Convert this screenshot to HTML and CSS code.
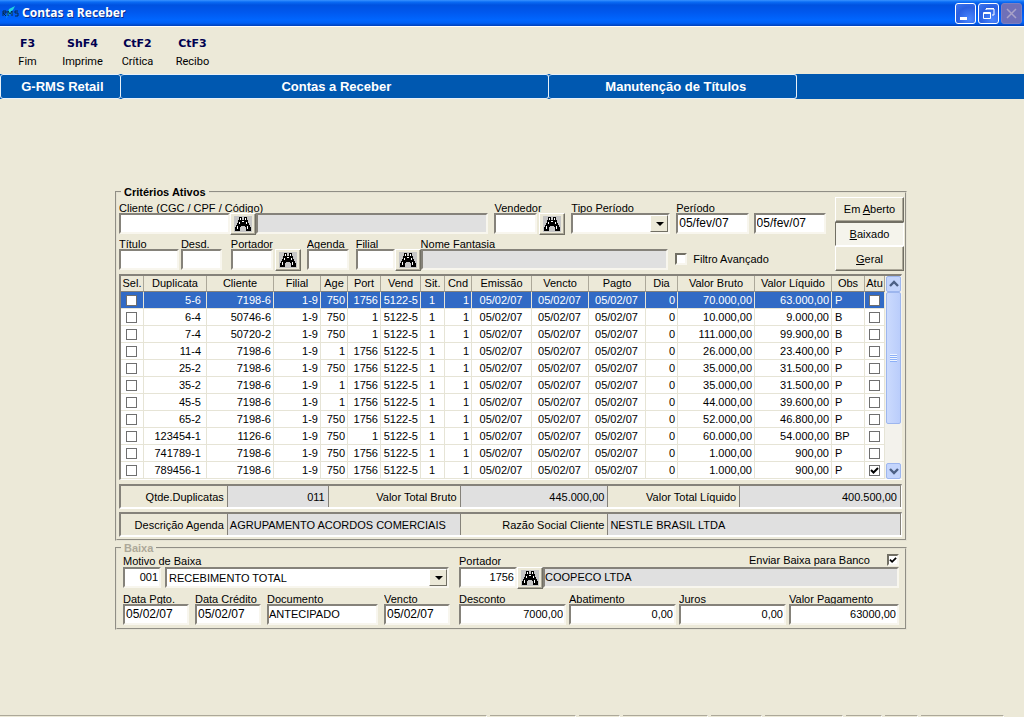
FILE: index.html
```html
<!DOCTYPE html>
<html lang="pt-BR">
<head>
<meta charset="utf-8">
<title>Contas a Receber</title>
<link rel="stylesheet" href="styles.css">
</head>
<body>
<svg class="defs" aria-hidden="true">
  <symbol id="bino" viewBox="0 0 18 16">
    <rect width="18" height="16" fill="#c6c6c6"/>
    <path d="M5 1h3v3h2V1h3v3h1v3h1v2h1v2h1v4h-5v-4h-1v-1H7v1H6v4H1v-4h1V9h1V7h1V4h1z" fill="#000"/>
    <path d="M6 2h1v2H6zM11 2h1v2h-1zM5 6h1v2H5zM12 6h1v2h-1zM3 10h1v3H3zM13 10h1v3h-1zM8 5h2v1H8z" fill="#fff"/>
  </symbol>
  <symbol id="up" viewBox="0 0 10 8"><path d="M1 6l4-4 4 4" fill="none" stroke="#4d6185" stroke-width="2.4"/></symbol>
  <symbol id="down" viewBox="0 0 10 8"><path d="M1 2l4 4 4-4" fill="none" stroke="#4d6185" stroke-width="2.4"/></symbol>
</svg>

<header class="titlebar">
  <svg class="logo" viewBox="0 0 17 16" width="17" height="16" aria-hidden="true">
    <path d="M4 14L7 4l6-3-2 4-3 2 3 1-5 2z" fill="#22d3e0"/>
    <path d="M1 11V6h3v2H1l3 3M6 11V6l2 3 2-3v5M16 6h-3v2h3v3h-3" fill="none" stroke="#062a4a" stroke-width="1"/>
  </svg>
  <h1 class="title">Contas a Receber</h1>
  <div class="winbtns">
    <button class="winbtn" aria-label="Minimizar"><svg viewBox="0 0 19 19"><path d="M4 13h7v3H4z" fill="#fff"/></svg></button>
    <button class="winbtn" aria-label="Restaurar"><svg viewBox="0 0 19 19"><path d="M7 6V5h8v6h-2M7 4.500h8" fill="none" stroke="#fff"/><path d="M4.500 8.500h7v6h-7zM4 9.500h8" fill="none" stroke="#fff"/></svg></button>
    <button class="winbtn winbtn-off" aria-label="Fechar" disabled><svg viewBox="0 0 19 19"><path d="M5 5l9 9M14 5l-9 9" fill="none" stroke="#a9a3c8" stroke-width="1.500"/></svg></button>
  </div>
</header>

<nav class="toolbar">
  <button class="tool"><b>F3</b><span>Fim</span></button>
  <button class="tool"><b>ShF4</b><span>Imprime</span></button>
  <button class="tool"><b>CtF2</b><span>Crítica</span></button>
  <button class="tool"><b>CtF3</b><span>Recibo</span></button>
</nav>

<div class="tabs">
  <div class="tab tab-a">G-RMS Retail</div>
  <div class="tab tab-b">Contas a Receber</div>
  <div class="tab tab-c">Manutenção de Títulos</div>
</div>

<main class="main">
<form>
<fieldset class="box box-criteria">
  <legend class="legend">Critérios Ativos</legend>
  <div class="filters">
    <div class="filter-rows">
      <div class="row">
        <div class="field w-cliente"><label for="cliente">Cliente (CGC / CPF / Código)</label>
          <div class="ctl"><input id="cliente" class="in w-cod"><button type="button" class="find" aria-label="Buscar cliente"><svg><use href="#bino"/></svg></button><input class="in ro grow" readonly aria-label="Nome do cliente"></div></div>
        <div class="field w-vendedor"><label for="vendedor">Vendedor</label>
          <div class="ctl ctl-gap"><input id="vendedor" class="in grow"><button type="button" class="find" aria-label="Buscar vendedor"><svg><use href="#bino"/></svg></button></div></div>
        <div class="field w-tipo"><label for="tipo">Tipo Período</label>
          <div class="ctl"><div class="combo"><select id="tipo"><option></option></select></div></div></div>
        <div class="field w-periodo"><label for="de">Período</label>
          <div class="ctl ctl-wide"><input id="de" class="in date grow" value="05/fev/07"><input class="in date grow" value="05/fev/07" aria-label="Período até"></div></div>
      </div>
      <div class="row">
        <div class="field w-titulo"><label for="titulo">Título</label><div class="ctl"><input id="titulo" class="in grow"></div></div>
        <div class="field w-desd"><label for="desd">Desd.</label><div class="ctl"><input id="desd" class="in grow"></div></div>
        <div class="field w-port"><label for="port">Portador</label>
          <div class="ctl ctl-gap"><input id="port" class="in grow"><button type="button" class="find" aria-label="Buscar portador"><svg><use href="#bino"/></svg></button></div></div>
        <div class="field w-agenda"><label for="agenda">Agenda</label><div class="ctl"><input id="agenda" class="in grow"></div></div>
        <div class="field w-filial"><label for="filial">Filial</label>
          <div class="ctl"><input id="filial" class="in grow"><button type="button" class="find" aria-label="Buscar filial"><svg><use href="#bino"/></svg></button></div></div>
        <div class="field w-nome"><label for="nome">Nome Fantasia</label><div class="ctl"><input id="nome" class="in ro grow" readonly></div></div>
        <label class="advanced"><input type="checkbox" class="chk chk-3d">Filtro Avançado</label>
      </div>
    </div>
    <div class="modes">
      <button type="button" class="mode">Em <u>A</u>berto</button>
      <button type="button" class="mode mode-on"><u>B</u>aixado</button>
      <button type="button" class="mode"><u>G</u>eral</button>
    </div>
  </div>

  <div class="gridbox">
    <table class="grid">
      <colgroup><col class="c1"><col class="c2"><col class="c3"><col class="c4"><col class="c5"><col class="c6"><col class="c7"><col class="c8"><col class="c9"><col class="c10"><col class="c11"><col class="c12"><col class="c13"><col class="c14"><col class="c15"><col class="c16"><col class="c17"></colgroup>
      <thead><tr><th>Sel.</th><th>Duplicata</th><th>Cliente</th><th>Filial</th><th>Age</th><th>Port</th><th>Vend</th><th>Sit.</th><th>Cnd</th><th>Emissão</th><th>Vencto</th><th>Pagto</th><th>Dia</th><th>Valor Bruto</th><th>Valor Líquido</th><th>Obs</th><th>Atu</th></tr></thead>
      <tbody>
      <tr class="sel"><td><input type="checkbox" class="chk" aria-label="Sel."></td><td>5-6</td><td>7198-6</td><td>1-9</td><td>750</td><td>1756</td><td>5122-5</td><td>1</td><td>1</td><td>05/02/07</td><td>05/02/07</td><td>05/02/07</td><td>0</td><td>70.000,00</td><td>63.000,00</td><td>P</td><td><input type="checkbox" class="chk" aria-label="Atu"></td></tr>
      <tr><td><input type="checkbox" class="chk" aria-label="Sel."></td><td>6-4</td><td>50746-6</td><td>1-9</td><td>750</td><td>1</td><td>5122-5</td><td>1</td><td>1</td><td>05/02/07</td><td>05/02/07</td><td>05/02/07</td><td>0</td><td>10.000,00</td><td>9.000,00</td><td>B</td><td><input type="checkbox" class="chk" aria-label="Atu"></td></tr>
      <tr><td><input type="checkbox" class="chk" aria-label="Sel."></td><td>7-4</td><td>50720-2</td><td>1-9</td><td>750</td><td>1</td><td>5122-5</td><td>1</td><td>1</td><td>05/02/07</td><td>05/02/07</td><td>05/02/07</td><td>0</td><td>111.000,00</td><td>99.900,00</td><td>B</td><td><input type="checkbox" class="chk" aria-label="Atu"></td></tr>
      <tr><td><input type="checkbox" class="chk" aria-label="Sel."></td><td>11-4</td><td>7198-6</td><td>1-9</td><td>1</td><td>1756</td><td>5122-5</td><td>1</td><td>1</td><td>05/02/07</td><td>05/02/07</td><td>05/02/07</td><td>0</td><td>26.000,00</td><td>23.400,00</td><td>P</td><td><input type="checkbox" class="chk" aria-label="Atu"></td></tr>
      <tr><td><input type="checkbox" class="chk" aria-label="Sel."></td><td>25-2</td><td>7198-6</td><td>1-9</td><td>750</td><td>1756</td><td>5122-5</td><td>1</td><td>1</td><td>05/02/07</td><td>05/02/07</td><td>05/02/07</td><td>0</td><td>35.000,00</td><td>31.500,00</td><td>P</td><td><input type="checkbox" class="chk" aria-label="Atu"></td></tr>
      <tr><td><input type="checkbox" class="chk" aria-label="Sel."></td><td>35-2</td><td>7198-6</td><td>1-9</td><td>1</td><td>1756</td><td>5122-5</td><td>1</td><td>1</td><td>05/02/07</td><td>05/02/07</td><td>05/02/07</td><td>0</td><td>35.000,00</td><td>31.500,00</td><td>P</td><td><input type="checkbox" class="chk" aria-label="Atu"></td></tr>
      <tr><td><input type="checkbox" class="chk" aria-label="Sel."></td><td>45-5</td><td>7198-6</td><td>1-9</td><td>1</td><td>1756</td><td>5122-5</td><td>1</td><td>1</td><td>05/02/07</td><td>05/02/07</td><td>05/02/07</td><td>0</td><td>44.000,00</td><td>39.600,00</td><td>P</td><td><input type="checkbox" class="chk" aria-label="Atu"></td></tr>
      <tr><td><input type="checkbox" class="chk" aria-label="Sel."></td><td>65-2</td><td>7198-6</td><td>1-9</td><td>750</td><td>1756</td><td>5122-5</td><td>1</td><td>1</td><td>05/02/07</td><td>05/02/07</td><td>05/02/07</td><td>0</td><td>52.000,00</td><td>46.800,00</td><td>P</td><td><input type="checkbox" class="chk" aria-label="Atu"></td></tr>
      <tr><td><input type="checkbox" class="chk" aria-label="Sel."></td><td>123454-1</td><td>1126-6</td><td>1-9</td><td>750</td><td>1</td><td>5122-5</td><td>1</td><td>1</td><td>05/02/07</td><td>05/02/07</td><td>05/02/07</td><td>0</td><td>60.000,00</td><td>54.000,00</td><td>BP</td><td><input type="checkbox" class="chk" aria-label="Atu"></td></tr>
      <tr><td><input type="checkbox" class="chk" aria-label="Sel."></td><td>741789-1</td><td>7198-6</td><td>1-9</td><td>750</td><td>1756</td><td>5122-5</td><td>1</td><td>1</td><td>05/02/07</td><td>05/02/07</td><td>05/02/07</td><td>0</td><td>1.000,00</td><td>900,00</td><td>P</td><td><input type="checkbox" class="chk" aria-label="Atu"></td></tr>
      <tr><td><input type="checkbox" class="chk" aria-label="Sel."></td><td>789456-1</td><td>7198-6</td><td>1-9</td><td>750</td><td>1756</td><td>5122-5</td><td>1</td><td>1</td><td>05/02/07</td><td>05/02/07</td><td>05/02/07</td><td>0</td><td>1.000,00</td><td>900,00</td><td>P</td><td><input type="checkbox" class="chk" aria-label="Atu" checked></td></tr>
      </tbody>
    </table>
    <div class="scroll">
      <button type="button" class="arrow" aria-label="Subir"><svg><use href="#up"/></svg></button>
      <div class="thumb"><i class="grip"></i></div>
      <div class="track"></div>
      <button type="button" class="arrow" aria-label="Descer"><svg><use href="#down"/></svg></button>
    </div>
  </div>

  <div class="sum sum-totals">
    <span>Qtde.Duplicatas</span><output>011</output>
    <span>Valor Total Bruto</span><output>445.000,00</output>
    <span>Valor Total Líquido</span><output>400.500,00</output>
  </div>
  <div class="sum sum-names">
    <span>Descrição Agenda</span><output>AGRUPAMENTO ACORDOS COMERCIAIS</output>
    <span>Razão Social Cliente</span><output>NESTLE BRASIL LTDA</output>
  </div>
</fieldset>

<fieldset class="box box-baixa">
  <legend class="legend legend-off">Baixa</legend>
  <div class="row">
    <div class="field w-motivo"><label for="motivo">Motivo de Baixa</label>
      <div class="ctl ctl-mid"><input id="motivo" class="in num w-motcod" value="001"><div class="combo"><select aria-label="Motivo"><option>RECEBIMENTO TOTAL</option></select></div></div></div>
    <div class="field w-banco">
      <div class="labels"><label for="port2">Portador</label><label class="send">Enviar Baixa para Banco<input type="checkbox" class="chk chk-3d" checked></label></div>
      <div class="ctl"><input id="port2" class="in num w-portcod" value="1756"><button type="button" class="find" aria-label="Buscar portador"><svg><use href="#bino"/></svg></button><input class="in ro ro-tight grow" readonly value="COOPECO LTDA" aria-label="Nome do portador"></div></div>
  </div>
  <div class="row row-pay">
    <div class="field p-1"><label for="pgto">Data Pgto.</label><div class="ctl"><input id="pgto" class="in date grow" value="05/02/07"></div></div>
    <div class="field p-1"><label for="cred">Data Crédito</label><div class="ctl"><input id="cred" class="in date grow" value="05/02/07"></div></div>
    <div class="field p-2"><label for="doc">Documento</label><div class="ctl"><input id="doc" class="in ro-tight grow" value="ANTECIPADO"></div></div>
    <div class="field p-3"><label for="venc">Vencto</label><div class="ctl"><input id="venc" class="in date grow" value="05/02/07"></div></div>
    <div class="row-vals">
      <div class="field"><label for="desc">Desconto</label><div class="ctl"><input id="desc" class="in num grow" value="7000,00"></div></div>
      <div class="field"><label for="abat">Abatimento</label><div class="ctl"><input id="abat" class="in num grow" value="0,00"></div></div>
      <div class="field"><label for="juros">Juros</label><div class="ctl"><input id="juros" class="in num grow" value="0,00"></div></div>
      <div class="field"><label for="vpag">Valor Pagamento</label><div class="ctl"><input id="vpag" class="in num grow" value="63000,00"></div></div>
    </div>
  </div>
</fieldset>
</form>
</main>

<footer class="status"><i class="s1"></i><i class="s2"></i><i class="s3"></i><i class="s4"></i><i class="s5"></i><i class="s6"></i><i class="s7"></i><i class="s8"></i><i class="s9"></i></footer>
</body>
</html>
```
FILE: styles.css
```css
* { box-sizing: border-box; }
body {
  margin: 0;
  min-height: 100vh;
  display: flex;
  flex-direction: column;
  background: #ece9d8;
  color: #000;
  font: 11px/14px "Liberation Sans", Arial, sans-serif;
}
button, input, select { font: inherit; color: inherit; margin: 0; border-radius: 0; }
.defs { position: absolute; width: 0; height: 0; }

/* Title bar */
.titlebar {
  height: 27px;
  display: flex;
  align-items: center;
  padding: 0 2px;
  background: linear-gradient(#3a93ff 0, #0a6cf5 2px, #0052e0 5px, #0058ee 12px, #0066ff 20px, #0060f5 23px, #0040b8 26px);
  border-bottom: 1px solid #fff;
}
.logo { margin-right: 3px; }
.title { flex: 1; margin: 0; color: #fff; font: bold 12px/18px "Noto Sans", sans-serif; text-shadow: 1px 1px #0a2d8c; }
.winbtns { display: flex; gap: 2px; }
.winbtn {
  width: 21px; height: 21px; padding: 0;
  border: 1px solid #fff; border-radius: 3px;
  background: radial-gradient(circle at 70% 80%, #4a86ff, #2a5fe0 60%, #3f77f0);
}
.winbtn svg { display: block; width: 19px; height: 19px; }
.winbtn-off { border-color: #7d7fc0; background: #6f70b8; }

/* Shortcut bar */
.toolbar { height: 47px; display: flex; padding: 10px 0 0 0; }
.tool {
  width: 55px; padding: 0; border: 0; background: none;
  display: flex; flex-direction: column; align-items: center; gap: 4px;
}
.tool b { color: #000050; font: bold 11px/14px "DejaVu Sans", sans-serif; }
.tool span { font: 11px/14px Roboto, sans-serif; }

.tabs { display: flex; height: 25px; background: #0058b0; }
.tab {
  border: 1px solid #e8f0f8; border-left-width: 0; border-radius: 3px;
  color: #fff; text-align: center;
  font: bold 13px/24px "Liberation Sans", Arial, sans-serif;
}
.tab-a { flex: 0 0 11.8%; border-left-width: 1px; padding-left: 4px; }
.tab-b { flex: 0 0 41.8%; padding-left: 4px; }
.tab-c { flex: 0 0 24.2%; padding-left: 7px; }

.main { flex: 1; padding: 88px 117px 0 115px; }

/* Group boxes */
.box { margin: 0; min-width: 0; border: 2px groove #e4e1d2; }
.box-criteria { padding: 0 1px 2px 2px; }
.box-baixa { margin-top: 2px; padding: 0 6px 2px 6px; }
.legend { margin-left: 2px; padding: 0 3px; font: bold 11px/10px "Liberation Sans", Arial, sans-serif; }
.box-baixa .legend { margin-left: -2px; }
.legend-off { color: #aca899; }

/* Fields */
.filters { display: flex; gap: 9px; }
.filter-rows { flex: 1; min-width: 0; padding-top: 4px; display: flex; flex-direction: column; gap: 2px; }
.row { display: flex; gap: 6px; }
.field { min-width: 0; display: flex; flex-direction: column; }
.field label { height: 12px; line-height: 14px; overflow: hidden; white-space: nowrap; }
.ctl { display: flex; height: 22px; }
.ctl-gap { gap: 2px; }
.ctl-mid { gap: 4px; }
.ctl-wide { gap: 5px; }
.grow { flex: 1 1 0; }
.in {
  min-width: 0; width: 0; height: 21px; padding: 0 2px 1px;
  background: #fff;
  border: 2px solid; border-color: #85827a #f8f6ee #f8f6ee #85827a;
  outline: 0;
}
.ro { background: #e0e0e0; }
.ro-tight { padding-left: 0; }
.num { text-align: right; padding-right: 1px; }
.date { font-size: 12px; padding-left: 1px; }
.find {
  flex: 0 0 26px; height: 22px; padding: 0;
  display: flex; align-items: center; justify-content: center;
  background: #ece9d8;
  border: 1px solid; border-color: #fff #716f64 #716f64 #fff;
  box-shadow: inset -1px -1px #aca899;
}
.find svg { width: 18px; height: 16px; }
.w-cliente { flex: 370 1 0; }
.w-cod { flex: 0 0 30%; }
.w-vendedor { flex: 71 1 0; }
.w-tipo { flex: 99 1 0; }
.w-periodo { flex: 150 1 0; }
.w-titulo { flex: 60 1 0; margin-right: -4px; }
.w-desd { flex: 41 1 0; margin-right: 3px; }
.w-port { flex: 70 1 0; }
.w-agenda { flex: 42 1 0; margin-right: 1px; }
.w-filial { flex: 65 1 0; margin-right: -6px; }
.w-nome { flex: 248 1 0; }
.advanced { flex: 151 1 0; display: flex; align-items: center; gap: 6px; padding: 9px 0 0 1px; white-space: nowrap; }

.combo {
  position: relative; flex: 1; height: 21px;
  border: 2px solid; border-color: #85827a #f8f6ee #f8f6ee #85827a;
  background: #fff;
}
.combo select {
  appearance: none; display: block; width: 100%; height: 17px; padding: 0 18px 0 2px;
  border: 0; background: transparent; outline: 0;
}
.combo::before {
  content: ""; position: absolute; top: 0; right: 0; bottom: 0; width: 16px;
  background: #ece9d8;
  border: 1px solid; border-color: #fff #716f64 #716f64 #fff;
}
.combo::after {
  content: ""; position: absolute; top: 7px; right: 4px;
  border: 4px solid transparent; border-top-color: #000; border-bottom-width: 0;
}

.modes { flex: 0 0 69px; display: flex; flex-direction: column; }
.mode {
  flex: 1; padding: 0; background: #ece9d8;
  border: 1px solid; border-color: #fff #716f64 #716f64 #fff;
  box-shadow: inset -1px -1px #aca899;
}
.mode-on { background: #f5f4ec; border-color: #716f64 #fff #fff #716f64; box-shadow: none; }

.chk {
  appearance: none; display: block; width: 11px; height: 11px; margin: 0 auto;
  border: 1px solid #6f6f6f; background: #fff;
}
.chk-3d { width: 12px; height: 12px; margin: 0; border: 2px solid; border-color: #716f64 #f8f6ee #f8f6ee #716f64; }
.chk:checked {
  background-image: url("data:image/svg+xml,%3Csvg xmlns='http://www.w3.org/2000/svg' viewBox='0 0 9 9'%3E%3Cpath d='M1 4l2.500 2.500L8 2' fill='none' stroke='%23000' stroke-width='2'/%3E%3C/svg%3E");
}

/* Title list */
.gridbox {
  display: flex; margin: 3px 2px 0 0;
  border: 2px solid; border-right-width: 1px; border-bottom-width: 1px;
  border-color: #85827a #fff #fff #85827a;
  background: #fff;
}
.grid { flex: 1; width: 0; table-layout: fixed; border-collapse: separate; border-spacing: 0; }
.grid th, .grid td {
  height: 17px; padding: 0 2px 0 1px; overflow: hidden; white-space: nowrap;
  text-align: right; font-weight: normal; line-height: 15px;
  border: 0 solid #e6e4d6; border-width: 0 1px 1px 0;
}
.grid th { height: 16px; padding: 0; text-align: center; background: #ece9d8; border-color: #aca899; border-bottom-color: #85827a; }
.grid td:nth-child(2) { padding-right: 5px; }
.grid td:nth-child(1), .grid td:nth-child(8), .grid td:nth-child(10), .grid td:nth-child(11), .grid td:nth-child(12), .grid td:nth-child(17) { text-align: center; }
.grid td:nth-child(16) { text-align: left; padding-left: 3px; }
.grid .sel td { background: #316ac5; color: #fff; }
.c1 { width: 23px; } .c2 { width: 63px; } .c3 { width: 67px; } .c4 { width: 47px; }
.c5 { width: 27px; } .c6 { width: 33px; } .c7 { width: 40px; } .c8 { width: 24px; }
.c9 { width: 27px; } .c10 { width: 60px; } .c11 { width: 57px; } .c12 { width: 57px; }
.c13 { width: 32px; } .c14 { width: 77px; } .c15 { width: 77px; } .c16 { width: 33px; }
.c17 { width: 20px; }

.scroll { flex: 0 0 17px; display: flex; flex-direction: column; padding: 0 1px; background: #f3f2ec; }
.arrow {
  flex: 0 0 16px; padding: 0; display: flex; align-items: center; justify-content: center;
  background: #c4d5fc; border: 1px solid #9db6ee; border-radius: 2px;
}
.arrow svg { width: 10px; height: 8px; }
.thumb {
  flex: 132; display: flex; align-items: center; justify-content: center;
  background: linear-gradient(90deg, #cbdafd, #bacdfb);
  border: 1px solid #9db6ee; border-radius: 2px;
}
.grip { width: 7px; height: 8px; background: repeating-linear-gradient(#eef4fe 0 1px, #8cb0f8 1px 2px); }
.track { flex: 40; }

/* Summary lines */
.sum {
  display: grid; margin: 4px 2px 0 0; height: 25px;
  border: 2px solid; border-color: #85827a #fff #fff #85827a;
  border-right-width: 1px;
}
.sum-totals { grid-template-columns: 107fr 101fr 132fr 148fr 132fr 161fr; }
.sum-names { grid-template-columns: 107fr 233fr 148fr 293fr; margin-top: 3px; }
.sum > * { padding: 0 3px; line-height: 22px; text-align: right; white-space: nowrap; overflow: hidden; border-right: 1px solid #85827a; }
.sum output { background: #e0e0e0; }
.sum-names output { text-align: left; padding-left: 2px; }

/* Payment */
.box-baixa .row { gap: 10px; }
.w-motivo { flex: 326 1 0; }
.w-motcod { flex: 0 0 38px; }
.w-banco { flex: 440 1 0; }
.w-portcod { flex: 0 0 58px; }
.box-baixa .labels label, .box-baixa .field > label { height: 14px; line-height: 16px; }
.box-baixa .row-pay .field > label { height: 12px; line-height: 14px; }
.labels { display: flex; justify-content: space-between; }
.labels .send { display: flex; align-items: center; gap: 17px; overflow: visible; }
.box-baixa .row-pay { gap: 6px; margin-top: 3px; }
.p-1 { flex: 66 1 0; }
.p-2 { flex: 111 1 0; }
.p-3 { flex: 66 1 0; margin-right: 3px; }
.row-vals { flex: 440 1 0; display: grid; grid-template-columns: 107fr 107fr 107fr 110fr; gap: 3px; }

/* Status line */
.status { display: flex; gap: 3px; height: 2px; padding-right: 20px; }
.status i { border-top: 1px solid #aca899; border-right: 1px solid #fff; }
.s1 { flex: 490; } .s2 { flex: 86; } .s3 { flex: 41; } .s4 { flex: 84; } .s5 { flex: 51; }
.s6 { flex: 78; } .s7 { flex: 35; } .s8 { flex: 32; } .s9 { flex: 83; }
```
